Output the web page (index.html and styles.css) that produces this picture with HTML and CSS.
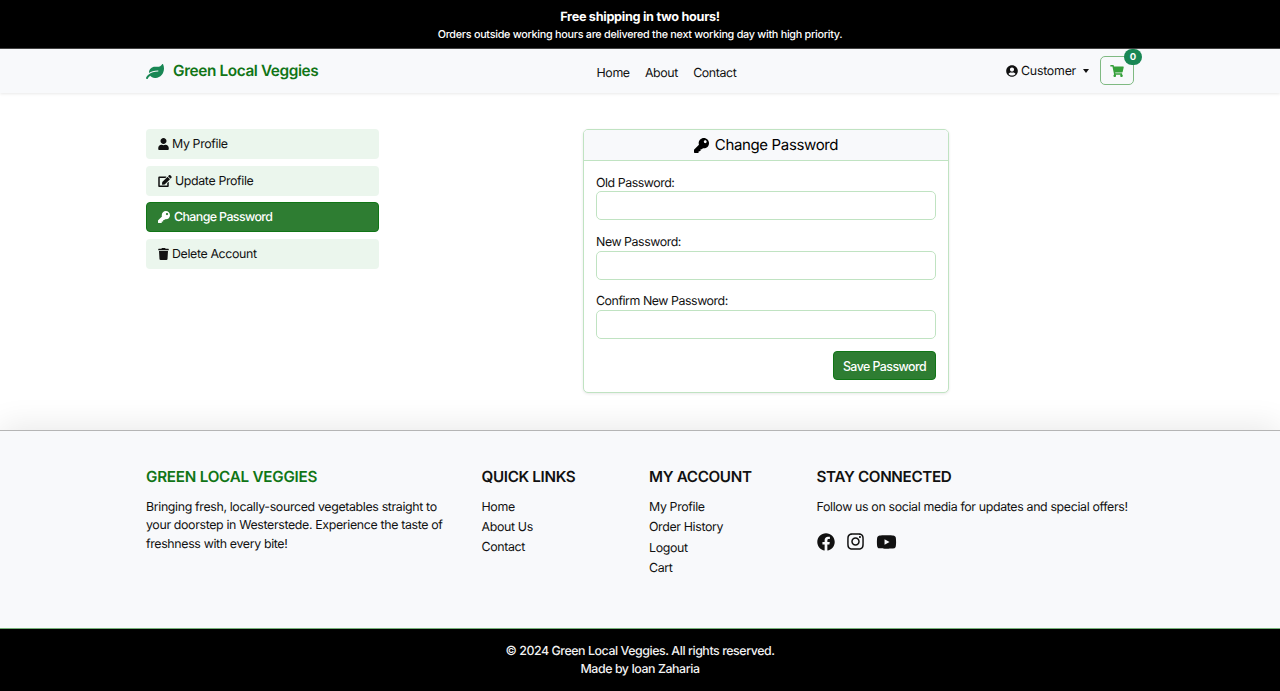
FILE: index.html
```html
<!DOCTYPE html>
<html lang="en">
<head>
<meta charset="utf-8">
<title>Green Local Veggies</title>
<link rel="stylesheet" href="styles.css">
</head>
<body>
<svg class="sprite" aria-hidden="true">
  <symbol id="key" viewBox="0 0 512 512"><path d="M512 176.001C512 273.203 433.202 352 336 352c-11.22 0-22.19-1.062-32.827-3.069l-24.012 27.014A23.999 23.999 0 0 1 261.223 384H224v40c0 13.255-10.745 24-24 24h-40v40c0 13.255-10.745 24-24 24H24c-13.255 0-24-10.745-24-24v-78.059c0-6.365 2.529-12.47 7.029-16.971l161.802-161.802C163.108 213.814 160 195.271 160 176 160 78.798 238.797.001 335.999 0 433.488-.001 512 78.511 512 176.001zM336 128c0 26.51 21.49 48 48 48s48-21.49 48-48-21.49-48-48-48-48 21.49-48 48z"/></symbol>
</svg>
<div class="banner">
  <strong class="banner-title">Free shipping in two hours!</strong>
  <span class="banner-text">Orders outside working hours are delivered the next working day with high priority.</span>
</div>
<nav class="navbar">
  <div class="container nav-inner">
    <a class="brand">
      <svg class="leaf" viewBox="0 0 576 512" preserveAspectRatio="none"><path d="M546.2 9.7c-5.6-12.5-21.6-13-28.3-1.2C486.9 62.4 431.4 96 368 96h-80C182 96 96 182 96 288c0 7 .8 13.7 1.5 20.5C161.3 262.8 253.4 224 384 224c8.8 0 16 7.2 16 16s-7.2 16-16 16C132.6 256 26 410.1 2.4 468c-6.6 16.3 1.2 34.9 17.5 41.6 16.4 6.8 35-1.1 41.8-17.3 1.5-3.6 20.9-47.9 71.9-90.6 32.4 43.9 94 85.8 174.9 77.2C465.5 467.5 576 326.7 576 154.3c0-50.2-10.8-102.2-29.8-144.6z"/></svg>
      <span class="brand-name">Green Local Veggies</span>
    </a>
    <div class="nav-links"><a>Home</a><a>About</a><a>Contact</a></div>
    <div class="nav-user">
      <a class="customer">
        <svg class="avatar" viewBox="0 0 496 512"><path d="M248 8C111 8 0 119 0 256s111 248 248 248 248-111 248-248S385 8 248 8zm0 96c48.6 0 88 39.4 88 88s-39.4 88-88 88-88-39.4-88-88 39.4-88 88-88zm0 344c-58.7 0-111.3-26.6-146.5-68.2 18.8-35.4 55.6-59.8 98.5-59.8 2.4 0 4.8.4 7.1 1.1 13 4.2 26.6 6.9 40.9 6.9 14.3 0 28-2.7 40.9-6.9 2.3-.7 4.7-1.1 7.1-1.1 42.9 0 79.7 24.4 98.5 59.8C359.3 421.4 306.7 448 248 448z"/></svg>
        <span>Customer</span><i class="caret"></i>
      </a>
      <a class="cart">
        <svg class="cart-icon" viewBox="0 0 576 512"><path d="M528.12 301.319l47.273-208C578.806 78.301 567.391 64 551.99 64H159.208l-9.166-44.81C147.758 8.021 137.93 0 126.529 0H24C10.745 0 0 10.745 0 24v16c0 13.255 10.745 24 24 24h69.883l70.248 343.435C147.325 417.1 136 435.222 136 456c0 30.928 25.072 56 56 56s56-25.072 56-56c0-15.674-6.447-29.835-16.824-40h209.647C430.447 426.165 424 440.326 424 456c0 30.928 25.072 56 56 56s56-25.072 56-56c0-22.172-12.888-41.332-31.579-50.405l5.517-24.276c3.413-15.018-8.002-29.319-23.403-29.319H218.117l-6.545-32h293.145c11.206 0 20.92-7.754 23.403-18.681z"/></svg>
        <span class="badge">0</span>
      </a>
    </div>
  </div>
</nav>
<main class="container main">
  <div class="side">
    <a class="side-item"><svg class="w-user" viewBox="0 0 448 512"><path d="M224 256c70.7 0 128-57.3 128-128S294.7 0 224 0 96 57.3 96 128s57.3 128 128 128zm89.6 32h-16.7c-22.2 10.2-46.9 16-72.9 16s-50.6-5.8-72.9-16h-16.7C60.2 288 0 348.2 0 422.4V464c0 26.5 21.5 48 48 48h352c26.5 0 48-21.5 48-48v-41.6c0-74.2-60.2-134.4-134.4-134.4z"/></svg><span>My Profile</span></a>
    <a class="side-item"><svg class="w-edit" viewBox="0 0 576 512"><path d="M402.6 83.2l90.2 90.2c3.8 3.8 3.8 10 0 13.8L274.4 405.6l-92.8 10.3c-12.4 1.4-22.9-9.1-21.5-21.5l10.3-92.8L388.8 83.2c3.8-3.8 10-3.8 13.8 0zm162-22.9l-48.8-48.8c-15.2-15.2-39.9-15.2-55.2 0l-35.4 35.4c-3.8 3.8-3.8 10 0 13.8l90.2 90.2c3.8 3.8 10 3.8 13.8 0l35.4-35.4c15.2-15.3 15.2-40 0-55.2zM384 346.2V448H64V128h229.8c3.2 0 6.2-1.3 8.5-3.5l40-40c7.6-7.6 2.2-20.5-8.5-20.5H48C21.5 64 0 85.5 0 112v352c0 26.5 21.5 48 48 48h352c26.5 0 48-21.5 48-48V306.2c0-10.7-12.9-16-20.5-8.5l-40 40c-2.2 2.3-3.5 5.3-3.5 8.5z"/></svg><span>Update Profile</span></a>
    <a class="side-item active"><svg class="w-key"><use href="#key"/></svg><span>Change Password</span></a>
    <a class="side-item"><svg class="w-user" viewBox="0 0 448 512"><path d="M432 32H312l-9.4-18.7A24 24 0 0 0 281.1 0H166.8a23.72 23.72 0 0 0-21.4 13.3L136 32H16A16 16 0 0 0 0 48v32a16 16 0 0 0 16 16h416a16 16 0 0 0 16-16V48a16 16 0 0 0-16-16zM53.2 467a48 48 0 0 0 47.9 45h245.8a48 48 0 0 0 47.9-45L416 128H32z"/></svg><span>Delete Account</span></a>
  </div>
  <section class="card">
    <h1 class="card-head"><svg class="head-key"><use href="#key"/></svg><span>Change Password</span></h1>
    <form class="card-body">
      <div class="field"><label for="old">Old Password:</label><input id="old" type="password"></div>
      <div class="field"><label for="new">New Password:</label><input id="new" type="password"></div>
      <div class="field"><label for="confirm">Confirm New Password:</label><input id="confirm" type="password"></div>
      <button class="save" type="button">Save Password</button>
    </form>
  </section>
</main>
<footer class="footer">
  <div class="container footer-grid">
    <div>
      <h2 class="green">GREEN LOCAL VEGGIES</h2>
      <p>Bringing fresh, locally-sourced vegetables straight to<br>your doorstep in Westerstede. Experience the taste of<br>freshness with every bite!</p>
    </div>
    <div>
      <h2>QUICK LINKS</h2>
      <ul><li>Home</li><li>About Us</li><li>Contact</li></ul>
    </div>
    <div>
      <h2>MY ACCOUNT</h2>
      <ul class="account"><li>My Profile</li><li>Order History</li><li>Logout</li><li>Cart</li></ul>
    </div>
    <div>
      <h2>STAY CONNECTED</h2>
      <p>Follow us on social media for updates and special offers!</p>
      <div class="social">
        <svg class="fb" viewBox="0 0 512 512"><path d="M504 256C504 119 393 8 256 8S8 119 8 256c0 123.78 90.69 226.38 209.25 245V327.69h-63V256h63v-54.64c0-62.15 37-96.48 93.67-96.48 27.14 0 55.52 4.84 55.52 4.84v61h-31.28c-30.8 0-40.41 19.12-40.41 38.73V256h68.78l-11 71.69h-57.78V501C413.31 482.38 504 379.78 504 256z"/></svg>
        <svg class="ig" viewBox="0 0 448 512"><path d="M224.1 141c-63.6 0-114.9 51.3-114.9 114.9s51.3 114.9 114.9 114.9S339 319.5 339 255.9 287.7 141 224.1 141zm0 189.6c-41.1 0-74.7-33.5-74.7-74.7s33.5-74.7 74.7-74.7 74.7 33.5 74.7 74.7-33.6 74.7-74.7 74.7zm146.4-194.3c0 14.9-12 26.8-26.8 26.8-14.9 0-26.8-12-26.8-26.8s12-26.8 26.8-26.8 26.8 12 26.8 26.8zm76.1 27.2c-1.7-35.9-9.9-67.7-36.2-93.9-26.2-26.2-58-34.4-93.9-36.2-37-2.1-147.9-2.1-184.9 0-35.8 1.7-67.6 9.9-93.9 36.1s-34.4 58-36.2 93.9c-2.1 37-2.1 147.9 0 184.9 1.7 35.9 9.9 67.7 36.2 93.9s58 34.4 93.9 36.2c37 2.1 147.9 2.1 184.9 0 35.9-1.7 67.7-9.9 93.9-36.2 26.2-26.2 34.4-58 36.2-93.9 2.1-37 2.1-147.8 0-184.8zM398.8 388c-7.8 19.6-22.9 34.7-42.6 42.6-29.5 11.7-99.5 9-132.1 9s-102.7 2.6-132.1-9c-19.6-7.8-34.7-22.9-42.6-42.6-11.7-29.5-9-99.5-9-132.1s-2.6-102.7 9-132.1c7.8-19.6 22.9-34.7 42.6-42.6 29.5-11.7 99.5-9 132.1-9s102.7-2.6 132.1 9c19.6 7.8 34.7 22.9 42.6 42.6 11.7 29.5 9 99.5 9 132.1s2.7 102.7-9 132.1z"/></svg>
        <svg class="yt" viewBox="0 0 576 512"><path d="M549.655 124.083c-6.281-23.65-24.787-42.276-48.284-48.597C458.781 64 288 64 288 64S117.22 64 74.629 75.486c-23.497 6.322-42.003 24.947-48.284 48.597-11.412 42.867-11.412 132.305-11.412 132.305s0 89.438 11.412 132.305c6.281 23.65 24.787 41.5 48.284 47.821C117.22 448 288 448 288 448s170.78 0 213.371-11.486c23.497-6.321 42.003-24.171 48.284-47.821 11.412-42.867 11.412-132.305 11.412-132.305s0-89.438-11.412-132.305zm-317.51 213.508V175.185l142.739 81.205-142.739 81.201z"/></svg>
      </div>
    </div>
  </div>
</footer>
<div class="copyright"><span>© 2024 Green Local Veggies. All rights reserved.</span><span class="made">Made by Ioan Zaharia</span></div>
</body>
</html>
```
FILE: styles.css
```css
* { box-sizing: border-box; }
body {
  margin: 0;
  height: 691px;
  display: flex;
  flex-direction: column;
  overflow: hidden;
  background: #fff;
  color: #111;
  font: 12.4px/18.3px Inter, "Liberation Sans", sans-serif;
  letter-spacing: -0.36px;
  text-rendering: geometricPrecision;
}
svg { fill: currentColor; flex: none; display: block; }
.sprite { position: absolute; width: 0; height: 0; }
.container { width: 988px; margin: 0 auto; }

.banner {
  height: 49px;
  flex: none;
  padding-top: 9px;
  background: #000;
  border-bottom: 1px solid #444;
  color: #fff;
  display: flex;
  flex-direction: column;
  align-items: center;
}
.banner-title { font-size: 12.7px; font-weight: 700; line-height: 17px; letter-spacing: -0.3px; }
.banner-text { font-size: 10.8px; font-weight: 500; line-height: 17px; letter-spacing: -0.27px; }

.navbar { height: 44px; flex: none; background: #f8f9fb; box-shadow: 0 1px 3px rgba(0,0,0,.09); }
.nav-inner { height: 43px; display: grid; grid-template-columns: 450.5px 1fr 129px; }
.brand { display: flex; align-items: center; gap: 9px; color: #107516; }
.leaf { width: 18px; height: 15px; margin-top: 1px; fill: #198754; }
.brand-name { font-size: 15.4px; font-weight: 600; letter-spacing: -0.4px; padding-top: 2px; }
.nav-links { display: flex; gap: 15.2px; padding-top: 15.2px; letter-spacing: -0.38px; }
.nav-user { display: flex; align-items: center; justify-content: space-between; }
.customer { display: flex; align-items: center; gap: 3.5px; padding: 1px 0 0 0.5px; letter-spacing: -0.25px; }
.avatar { width: 12px; height: 12px; }
.caret { border: 3.7px solid transparent; border-top: 4px solid #111; border-bottom: 0; margin-left: 3px; }
.cart { position: relative; width: 34px; height: 29px; border: 1px solid #7fba82; border-radius: 5px; display: flex; align-items: center; justify-content: center; }
.cart-icon { width: 14px; height: 12px; fill: #35a03a; }
.badge { position: absolute; top: -8px; right: -9px; width: 18px; height: 16px; border-radius: 8px; background: #198754; color: #fff; font-size: 9.5px; font-weight: 700; line-height: 17px; text-align: center; letter-spacing: 0; }

.main { display: flex; height: 337px; flex: none; padding-top: 36px; align-items: flex-start; }
.side { width: 233px; display: flex; flex-direction: column; gap: 6.6px; }
.side-item { height: 30px; display: flex; align-items: center; gap: 3px; padding: 0.6px 0 0 12px; border-radius: 4px; background: #ebf6ed; letter-spacing: -0.37px; }
.side-item.active { background: #2e7d32; border: 1px solid #107516; padding: 0.6px 0 0 11px; gap: 4px; color: #fff; font-weight: 500; letter-spacing: -0.6px; }
.w-user { width: 11px; height: 12px; }
.w-edit { width: 14px; height: 12px; }
.w-key { width: 12px; height: 12px; }
.card { width: 366px; height: 264px; margin-left: 204px; border: 1px solid #c0e3c2; border-radius: 5px; box-shadow: 0 1px 3px rgba(0,0,0,.09); overflow: hidden; background: #fff; }
.card-head { margin: 0; height: 31px; display: flex; align-items: center; justify-content: center; gap: 6px; background: #f8f9fb; border-bottom: 1px solid #c0e3c2; font-size: 15px; font-weight: 400; color: #000; letter-spacing: -0.36px; }
.head-key { width: 15px; height: 15px; }
.card-body { display: flex; flex-direction: column; padding: 12px; }
.field { display: flex; flex-direction: column; height: 59.4px; }
.field label { padding-top: 0.7px; margin-bottom: -0.7px; letter-spacing: -0.46px; }
.field input { height: 29px; border: 1px solid #c0e3c2; border-radius: 5px; background: #fff; margin: 0; }
.save { align-self: flex-end; width: 103px; height: 29px; margin: 0; padding: 1px 0 0; border: 1px solid #107516; border-radius: 4px; background: #2e7d32; color: #fff; font: 500 12.4px Inter, sans-serif; letter-spacing: -0.55px; }

.footer { position: relative; height: 198px; flex: none; background: #f8f9fb; border-top: 1px solid #b5b5b5; box-shadow: 0 -4px 30px rgba(0,0,0,.09); padding-top: 36px; }
.footer-grid { display: grid; grid-template-columns: 335.5px 167.5px 167.5px 1fr; }
.footer h2 { margin: 0 0 11px; font-size: 15.2px; font-weight: 600; line-height: 20px; white-space: nowrap; letter-spacing: -0.33px; }
.footer .green { color: #107516; letter-spacing: -0.22px; }
.footer p { margin: 0; white-space: nowrap; }
.footer ul { list-style: none; margin: 0; padding: 0; line-height: 18px; display: flex; flex-direction: column; gap: 2px; }
.footer .account { gap: 2.3px; }
.social { display: flex; align-items: center; gap: 12px; margin-top: 16px; }
.fb { width: 18px; height: 18px; }
.ig { width: 17px; height: 19px; }
.yt { width: 21px; height: 18px; }
.copyright { position: relative; flex: none; height: 63px; padding-top: 12.5px; background: #000; border-top: 1px solid #75b178; color: #f2f2f2; font-weight: 500; display: flex; flex-direction: column; align-items: center; letter-spacing: -0.44px; }
```
